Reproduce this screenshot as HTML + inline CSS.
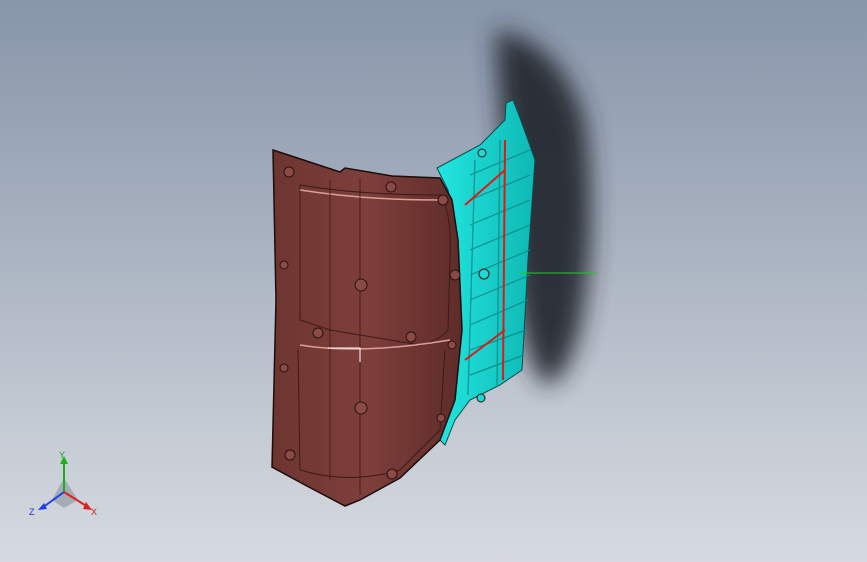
<!DOCTYPE html>
<html><head><style>
html,body{margin:0;padding:0;width:867px;height:562px;overflow:hidden}
body{background:linear-gradient(180deg,#8896aa 0%,#a6b0bf 40%,#c4cad3 75%,#d6dae0 100%);font-family:"Liberation Sans",sans-serif}
</style></head><body>
<svg width="867" height="562" viewBox="0 0 867 562" style="position:absolute;left:0;top:0">
<defs>
<filter id="b" x="-50%" y="-50%" width="200%" height="200%"><feGaussianBlur stdDeviation="12"/></filter>
<linearGradient id="br" x1="0" y1="0" x2="1" y2="0">
<stop offset="0" stop-color="#6e3530"/><stop offset="0.5" stop-color="#7e3f3b"/><stop offset="1" stop-color="#5e2c29"/></linearGradient>
<linearGradient id="cy" x1="0" y1="0" x2="1" y2="0">
<stop offset="0" stop-color="#22e6e0"/><stop offset="1" stop-color="#0fb8b4"/></linearGradient>
</defs>
<path d="M495 30 Q560 40 585 120 Q600 230 580 330 Q565 385 545 385 Q520 360 510 250 Q500 120 495 30Z" fill="#262a30" filter="url(#b)" opacity="0.95"/>
<!-- cyan part -->
<path d="M437 168 L480 145 L505 120 L506 103 L513 100 L520 118 L528 140 L535 160 L528 260 L522 370 L500 385 L470 400 L455 420 L445 445 L440 440 L455 400 L462 330 L458 240 L448 190Z" fill="url(#cy)" stroke="#0a4a4a" stroke-width="1"/>
<g stroke="#0c8f8c" stroke-width="1.2">
<line x1="470" y1="175" x2="530" y2="150"/><line x1="470" y1="200" x2="530" y2="175"/>
<line x1="470" y1="225" x2="530" y2="200"/><line x1="470" y1="250" x2="530" y2="225"/>
<line x1="470" y1="275" x2="530" y2="250"/><line x1="470" y1="300" x2="530" y2="275"/>
<line x1="470" y1="325" x2="528" y2="300"/><line x1="470" y1="350" x2="526" y2="330"/>
<line x1="470" y1="375" x2="524" y2="355"/>
<line x1="475" y1="160" x2="468" y2="395"/><line x1="500" y1="140" x2="497" y2="385"/>
</g>
<g stroke="#e01818" stroke-width="2">
<line x1="505" y1="140" x2="503" y2="380"/>
<line x1="465" y1="205" x2="505" y2="170"/><line x1="465" y1="360" x2="505" y2="330"/>
</g>
<line x1="520" y1="273" x2="597" y2="273" stroke="#18d018" stroke-width="1"/>
<!-- brown part -->
<path d="M273 150 L340 172 L345 168 L392 176 L440 178 L452 200 L458 240 L462 330 L455 400 L440 440 L400 478 L360 500 L345 506 L305 485 L272 467 L276 300Z" fill="url(#br)" stroke="#1b0d0c" stroke-width="1.5"/>
<path d="M300 185 Q360 195 440 195 Q452 210 450 260 L448 330 Q440 340 420 345 L330 330 L300 320Z" fill="none" stroke="#3a1a18" stroke-width="1"/>
<path d="M300 190 Q365 200 438 200" fill="none" stroke="#d9a09a" stroke-width="1.5"/>
<path d="M300 345 Q360 355 450 340" fill="none" stroke="#d9a09a" stroke-width="1.5"/>
<path d="M298 350 L300 470 Q350 485 400 470 L440 430 L445 350" fill="none" stroke="#3a1a18" stroke-width="1"/>
<line x1="330" y1="180" x2="330" y2="480" stroke="#3a1a18" stroke-width="0.8"/>
<line x1="360" y1="178" x2="360" y2="495" stroke="#3a1a18" stroke-width="0.8"/>
<path d="M328 348 L360 348 L360 362" fill="none" stroke="#fff" stroke-width="1"/>
<g fill="#8a4a45" stroke="#2a1210" stroke-width="1">
<circle cx="289" cy="172" r="5"/><circle cx="391" cy="187" r="5"/><circle cx="443" cy="200" r="5"/>
<circle cx="284" cy="265" r="4"/><circle cx="361" cy="285" r="6"/><circle cx="455" cy="275" r="5"/>
<circle cx="318" cy="333" r="5"/><circle cx="411" cy="337" r="5"/><circle cx="452" cy="345" r="4"/>
<circle cx="284" cy="368" r="4"/><circle cx="361" cy="408" r="6"/><circle cx="441" cy="418" r="4"/>
<circle cx="290" cy="455" r="5"/><circle cx="392" cy="474" r="5"/>
<circle cx="482" cy="153" r="4" fill="#1fd8d2"/><circle cx="484" cy="274" r="5" fill="#1fd8d2"/><circle cx="481" cy="398" r="4" fill="#1fd8d2"/>
</g>
<!-- triad -->
<polygon points="52,500 64,478 78,500 64,508" fill="#9aa2ac" opacity="0.8"/>
<line x1="64" y1="492" x2="64" y2="462" stroke="#19b019" stroke-width="2"/>
<polygon points="60,464 64,456 68,464" fill="#19b019"/>
<line x1="64" y1="492" x2="88" y2="507" stroke="#e02020" stroke-width="2"/>
<polygon points="86,502 92,510 83,509" fill="#e02020"/>
<line x1="64" y1="492" x2="42" y2="508" stroke="#2040e0" stroke-width="2"/>
<polygon points="44,503 38,510 47,509" fill="#2040e0"/>
<text x="59" y="458" font-size="9" fill="#19a019">Y</text>
<text x="91" y="515" font-size="9" fill="#d02020">X</text>
<text x="29" y="515" font-size="9" fill="#2030c0">Z</text>
</svg>
</body></html>
